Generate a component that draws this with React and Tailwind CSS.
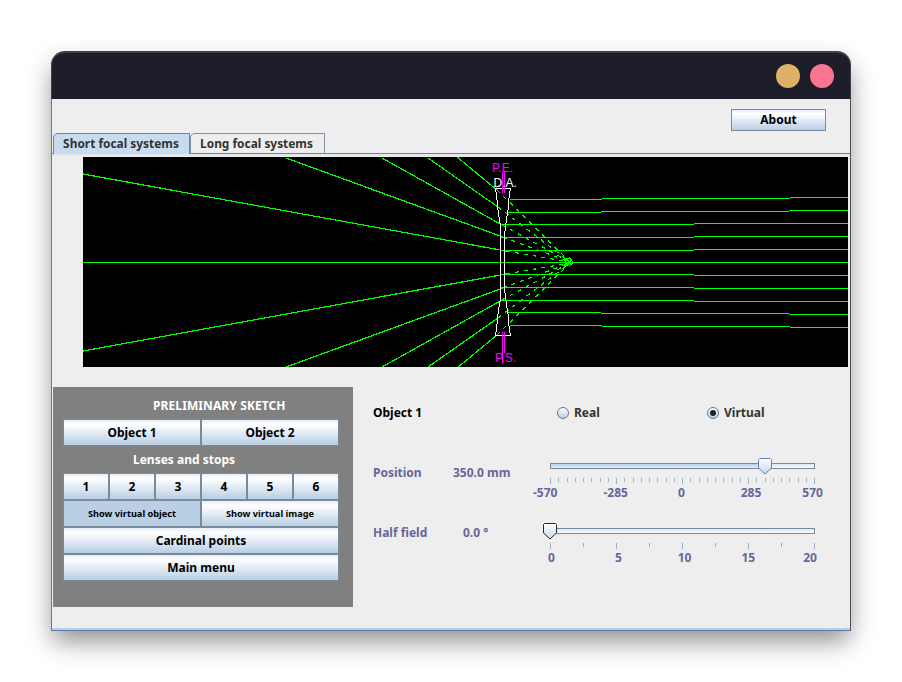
import React from "react";

const font = { fontFamily: '"Noto Sans", sans-serif' };

const btn =
  "flex items-center justify-center border border-[#7a8a99] bg-gradient-to-b from-[#e4edf6] via-[#ffffff] via-[18%] to-[#b8cfe5] font-bold text-black";

// incoming rays, the lower half mirrors them around y = 262.5
const incoming = [
  [83, 174, 506, 251],
  [286, 158, 503, 237],
  [382, 158, 502, 225],
  [428, 158, 498, 207],
  [457, 157, 497, 190],
];

// lens exit rows: start x, then [x, y] of each step
const outgoing = [
  [510, 199, 602, 198, 790, 197, 848],
  [507, 212, 601, 211, 789, 210, 848],
  [500, 224, 694, 223, 848],
  [500, 237, 694, 236, 848],
  [500, 250, 694, 249, 848],
  [500, 274, 694, 275, 848],
  [500, 287, 694, 288, 848],
  [500, 300, 694, 301, 848],
  [507, 312, 601, 313, 789, 314, 848],
  [510, 325, 602, 326, 790, 327, 848],
];

function mirror(y) {
  return 525 - y;
}

function RayDiagram() {
  const lensLeft = [[495.5, 188], [497, 200], [498, 210], [500, 223], [500.5, 233]];
  const lensRight = [[510.5, 188], [509, 198], [508, 210], [506, 223], [504.5, 235]];
  const pts = (arr) => arr.map((p) => p.join(",")).join(" ");
  const flip = (arr) => [...arr].reverse().map(([x, y]) => [x, 524 - y]);

  return (
    <svg viewBox="83 157 765 210" className="block h-[210px] w-[765px] bg-black" shapeRendering="crispEdges">
      {/* object side */}
      <line x1="83" y1="262.5" x2="848" y2="262.5" stroke="#00ff00" />
      {incoming.map(([x1, y1, x2, y2], i) => (
        <g key={i} stroke="#00ff00">
          <line x1={x1} y1={y1} x2={x2} y2={y2} strokeWidth="1.2" />
          <line x1={x1} y1={mirror(y1)} x2={x2} y2={mirror(y2)} strokeWidth="1.2" />
          <line x1={x2} y1={y2} x2="570" y2="262" strokeDasharray="4 5" strokeWidth="1.2" />
          <line x1={x2} y1={mirror(y2)} x2="570" y2="263" strokeDasharray="4 5" strokeWidth="1.2" />
        </g>
      ))}

      {/* image side */}
      {outgoing.map((r, i) => {
        const segs = [];
        for (let k = 0; k + 2 < r.length; k += 2) {
          segs.push(<line key={k} x1={r[k]} y1={r[k + 1] + 0.5} x2={r[k + 2]} y2={r[k + 1] + 0.5} stroke="#00ff00" />);
        }
        return <g key={i}>{segs}</g>;
      })}

      {/* focus */}
      <circle cx="568" cy="261" r="3" fill="none" stroke="#00ff00" />
      <path d="M565 263 L573 262 L569 257 M565 262 L573 263 L569 266" fill="none" stroke="#00ff00" />

      {/* lens */}
      <polyline points={pts([...lensLeft, [500.5, 262], ...flip(lensLeft)])} fill="none" stroke="#ffffff" />
      <polyline points={pts([...lensRight, [504.5, 262], ...flip(lensRight)])} fill="none" stroke="#ffffff" />
      <line x1="495" y1="188.5" x2="511" y2="188.5" stroke="#ffffff" />
      <line x1="495" y1="335.5" x2="511" y2="335.5" stroke="#ffffff" />

      {/* pupils */}
      <g stroke="#ff00ff">
        <line x1="502.5" y1="172" x2="502.5" y2="193" />
        <line x1="504.5" y1="172" x2="504.5" y2="193" />
        <line x1="502.5" y1="332" x2="502.5" y2="363" />
        <line x1="504.5" y1="332" x2="504.5" y2="353" />
      </g>
      <g style={{ fontFamily: '"Liberation Sans", sans-serif' }} fontSize="12">
        <text x="492" y="172" fill="#ff00ff">P.E.</text>
        <text x="493.5" y="187" fill="#ffffff">D.A.</text>
        <text x="495" y="362" fill="#ff00ff">P.S.</text>
      </g>
    </svg>
  );
}

function Radio({ checked }) {
  return (
    <span className="flex h-[12px] w-[12px] items-center justify-center rounded-full border border-[#66788c] bg-gradient-to-b from-[#ffffff] to-[#b8cfe5]">
      {checked && <span className="h-[6px] w-[6px] rounded-full bg-[#222222]" />}
    </span>
  );
}

function Thumb({ stroke, id }) {
  return (
    <svg width="16" height="17" viewBox="0 0 16 17" className="block">
      <defs>
        <linearGradient id={id} x1="0" y1="0" x2="0" y2="1">
          <stop offset="0" stopColor="#ffffff" />
          <stop offset="1" stopColor="#c4d8ec" />
        </linearGradient>
      </defs>
      <path d="M2.5 .5 H13.5 L14.5 1.5 V10 L8 16 L1.5 10 V1.5 Z" fill={`url(#${id})`} stroke={stroke} />
    </svg>
  );
}

function Slider({ thumbClass, fillClass, thumbStroke, id, ticks, major, labels }) {
  return (
    <div className="w-[265px]">
      <div className="relative flex h-[16px] items-center">
        <div className="flex h-[6px] w-full border border-[#7a8a99] bg-gradient-to-b from-[#dfe6ee] to-[#fbfcfd]">
          <div className={`h-full bg-gradient-to-b from-[#b8cfe5] to-[#e4edf6] ${fillClass}`} />
        </div>
        <div className={`absolute top-0 ${thumbClass}`}>
          <Thumb stroke={thumbStroke} id={id} />
        </div>
      </div>
      <div className="mt-[4px] flex h-[6px] items-start justify-between">
        {Array.from({ length: ticks }).map((_, i) => (
          <span key={i} className={`w-px bg-[#9db4cf] ${i % major === 0 ? "h-[6px]" : "h-[4px]"}`} />
        ))}
      </div>
      <div className="relative flex h-[18px] items-center text-xs font-bold text-[#66669a]">{labels}</div>
    </div>
  );
}

export default function App() {
  return (
    <div className="min-h-screen bg-white pl-[51px] pt-[51px]" style={font}>
      <div className="flex h-[580px] w-[800px] flex-col rounded-t-[14px] shadow-[0_12px_26px_-2px_rgba(0,0,0,0.45)]">
        {/* Title bar */}
        <div className="flex h-[48px] items-center justify-end gap-[10px] rounded-t-[14px] border-x border-t-2 border-x-[#3f4048] border-t-[#3f4048] bg-[#1e1e2a] pr-[16px]">
          <span className="h-[24px] w-[24px] rounded-full bg-[#deb068]" />
          <span className="h-[24px] w-[24px] rounded-full bg-[#fb7590]" />
        </div>

        {/* Java frame */}
        <div className="flex flex-1 flex-col border-x border-b border-[#5d7aa8] border-r-[#4a5058] bg-[#eeeeee]">
          <div className="flex flex-1 flex-col border-b-2 border-[#b8cfe5]">
            <div className="flex h-[34px] justify-end pr-[24px] pt-[10px]">
              <button className={`${btn} h-[22px] w-[95px] text-xs`}>About</button>
            </div>

            {/* Tabs */}
            <div className="flex h-[20px] pl-[1px] text-[11.9px] font-bold text-[#333333]">
              <div className="relative z-10 flex h-[21px] w-[137px] items-center justify-center rounded-tl-[5px] border border-b-0 border-[#6382bf] bg-[#c8dcf0] pr-px">
                Short focal systems
              </div>
              <div className="flex h-[20px] w-[135px] items-center justify-center rounded-tl-[5px] border border-b-0 border-[#8090ad] pr-[2px]">
                Long focal systems
              </div>
            </div>

            {/* Tab pane */}
            <div className="flex-1 border-t border-[#6382bf]">
              <div className="border-t-2 border-[#e0e8f2] pl-[31px] pt-px">
                <RayDiagram />
              </div>

              <div className="mt-[20px] flex">
                {/* Preliminary sketch panel */}
                <div className="ml-px h-[220px] w-[300px] bg-[#808080] pl-[10px] text-xs">
                  <div className="flex h-[32px] items-center pl-[90px] pt-[5px] font-bold tracking-[0.1px] text-white">PRELIMINARY SKETCH</div>
                  <div className="w-[276px]">
                    <div className="grid h-[27px] grid-cols-2">
                      <button className={btn}>Object 1</button>
                      <button className={btn}>Object 2</button>
                    </div>
                    <div className="flex h-[27px] items-center pl-[70px] font-bold text-white">Lenses and stops</div>
                    <div className="grid h-[27px] grid-cols-6">
                      {[1, 2, 3, 4, 5, 6].map((n) => (
                        <button key={n} className={btn}>{n}</button>
                      ))}
                    </div>
                    <div className="grid h-[27px] grid-cols-2 text-[9.2px]">
                      <button className="flex items-center justify-center border border-[#7a8a99] bg-[#b8cfe5] pt-px font-bold text-black">
                        Show virtual object
                      </button>
                      <button className={`${btn} pt-px`}>Show virtual image</button>
                    </div>
                    <button className={`${btn} h-[27px] w-full`}>Cardinal points</button>
                    <button className={`${btn} h-[27px] w-full`}>Main menu</button>
                  </div>
                </div>

                {/* Controls */}
                <div className="pl-[20px] text-xs font-bold">
                  <div className="mt-[17px] flex h-[18px] items-center">
                    <span className="w-[184px] text-black">Object 1</span>
                    <Radio />
                    <span className="ml-[5px] w-[133px] text-[#333333]">Real</span>
                    <Radio checked />
                    <span className="ml-[5px] text-[#333333]">Virtual</span>
                  </div>

                  <div className="mt-[36px] flex items-start text-[#66669a]">
                    <span className="mt-[7px] w-[80px]">Position</span>
                    <span className="mt-[7px] w-[97px]">350.0 mm</span>
                    <Slider
                      id="thumb-position"
                      thumbClass="left-[207px]"
                      fillClass="w-[208px]"
                      thumbStroke="#6382bf"
                      ticks={33}
                      major={8}
                      labels={
                        <>
                          <span className="-ml-[17px]">-570</span>
                          <span className="ml-[46px]">-285</span>
                          <span className="ml-[50px]">0</span>
                          <span className="ml-[56px]">285</span>
                          <span className="ml-[41px]">570</span>
                        </>
                      }
                    />
                  </div>

                  <div className="mt-[21px] flex items-start text-[#66669a]">
                    <span className="mt-[2px] w-[90px]">Half field</span>
                    <span className="mt-[2px] w-[87px]">0.0 °</span>
                    <Slider
                      id="thumb-field"
                      thumbClass="-left-[8px]"
                      fillClass="w-0"
                      thumbStroke="#26262e"
                      ticks={9}
                      major={2}
                      labels={
                        <>
                          <span className="-ml-[2px]">0</span>
                          <span className="ml-[60px]">5</span>
                          <span className="ml-[56px]">10</span>
                          <span className="ml-[50px]">15</span>
                          <span className="ml-[48px]">20</span>
                        </>
                      }
                    />
                  </div>
                </div>
              </div>
            </div>
          </div>
        </div>
      </div>
    </div>
  );
}
